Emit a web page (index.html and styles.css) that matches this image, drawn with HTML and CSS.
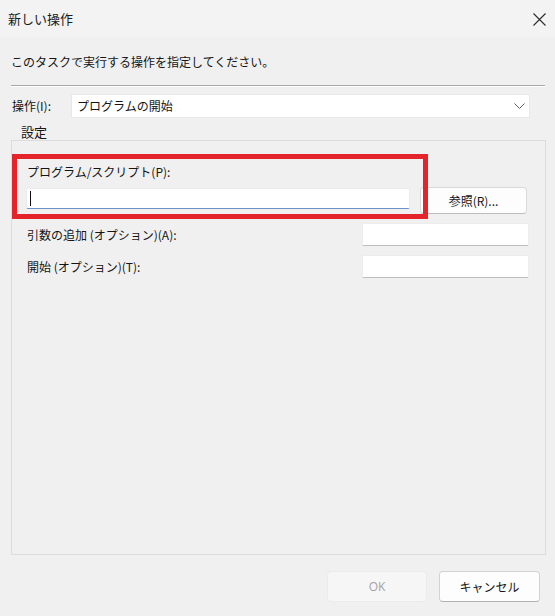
FILE: index.html
```html
<!DOCTYPE html>
<html lang="ja">
<head>
<meta charset="utf-8">
<title>新しい操作</title>
<link rel="stylesheet" href="styles.css">
</head>
<body>
<div class="dialog">
  <header class="titlebar">
    <span class="title">新しい操作</span>
    <svg class="close" width="13" height="13" viewBox="0 0 13 13" aria-hidden="true">
      <path d="M0.5 0.5 L12.5 12.5 M12.5 0.5 L0.5 12.5" stroke="#2b2b2b" stroke-width="1.1" fill="none"/>
    </svg>
  </header>
  <main class="content">
    <p class="intro">このタスクで実行する操作を指定してください。</p>
    <div class="sep"></div>
    <div class="action-row">
      <span class="action-label">操作(I):</span>
      <div class="combo">
        <span class="combo-text">プログラムの開始</span>
        <svg class="chevron" width="11" height="6" viewBox="0 0 11 6" aria-hidden="true">
          <polyline points="0.5,0.5 5.5,5.5 10.5,0.5" stroke="#5f5f5f" stroke-width="1" fill="none"/>
        </svg>
      </div>
    </div>
    <div class="group-title">設定</div>
    <section class="group">
      <div class="prog-label">プログラム/スクリプト(P):</div>
      <div class="prog-row">
        <div class="field prog-field"><span class="caret"></span></div>
        <button class="btn browse">参照(R)...</button>
      </div>
      <div class="opt-row">
        <span class="opt-label">引数の追加 (オプション)(A):</span>
        <div class="field opt-field"></div>
      </div>
      <div class="opt-row">
        <span class="opt-label">開始 (オプション)(T):</span>
        <div class="field opt-field"></div>
      </div>
    </section>
    <footer class="buttons">
      <button class="btn ok" disabled>OK</button>
      <button class="btn cancel">キャンセル</button>
    </footer>
  </main>
  <div class="highlight"></div>
</div>
</body>
</html>
```

FILE: styles.css
```css
* { box-sizing: border-box; }

html, body {
  margin: 0;
  padding: 0;
  background: #f0f0f0;
}

body {
  font-family: "Noto Sans CJK JP", "Noto Sans", sans-serif;
  font-size: 12px;
  color: #151515;
  width: 555px;
  height: 616px;
  overflow: hidden;
}

.dialog {
  width: 555px;
  height: 616px;
}

.titlebar {
  height: 37px;
  background: #f3f3f3;
  display: flex;
  align-items: center;
  justify-content: space-between;
  padding: 0 9px 0 8px;
}

.title {
  font-size: 13px;
  line-height: 18px;
  color: #1a1a1a;
}

.close { display: block; margin-top: 1px; }

.content {
  padding-left: 11px;
  width: 546px;
}

.intro {
  margin: 15px 0 0 0;
  line-height: 20px;
  font-size: 12px;
}

.sep {
  margin-top: 13px;
  width: 534px;
  height: 2px;
  border-top: 1px solid #a8a8a8;
  border-bottom: 1px solid #ffffff;
}

.action-row {
  margin-top: 7px;
  display: flex;
  align-items: center;
  height: 24px;
}

.action-label {
  width: 60px;
  padding-left: 1px;
  line-height: 16px;
}

.combo {
  width: 459px;
  height: 24px;
  background: #ffffff;
  border: 1px solid #e8e8e8;
  display: flex;
  align-items: center;
  justify-content: space-between;
  padding: 0 4px 0 5px;
}

.combo-text { line-height: 16px; }

.chevron { display: block; }

.group-title {
  margin-top: 6px;
  padding-left: 10px;
  font-size: 13px;
  line-height: 16px;
  height: 16px;
}

.group {
  width: 535px;
  height: 415px;
  border: 1px solid #dcdcdc;
  padding: 0 16px 0 0;
}

.prog-label {
  margin-top: 23px;
  padding-left: 15px;
  line-height: 16px;
}

.prog-row {
  margin-top: 7px;
  display: flex;
  align-items: flex-start;
  padding-left: 14px;
}

.field {
  background: #ffffff;
  border: 1px solid #ececec;
  border-bottom-color: #bdbdbd;
  border-radius: 2px;
}

.prog-field {
  width: 384px;
  height: 21px;
  margin-top: 1px;
  display: flex;
  align-items: center;
  padding-left: 3px;
  border-bottom-color: #6d92c8;
}

.caret {
  display: block;
  width: 1px;
  height: 15px;
  background: #111;
}

.btn {
  font-family: "Noto Sans CJK JP", "Noto Sans", sans-serif;
  font-size: 12px;
  line-height: 16px;
  color: #151515;
  background: #fdfdfd;
  border: 1px solid #dadada;
  border-bottom-color: #bdbdbd;
  border-radius: 4px;
  padding: 0;
  margin: 0;
  display: flex;
  align-items: center;
  justify-content: center;
}

.browse {
  width: 107px;
  height: 27px;
  margin-left: 10px;
}

.opt-row {
  margin-top: 9px;
  display: flex;
  align-items: center;
  justify-content: space-between;
  padding-left: 15px;
  height: 23px;
}

.opt-label { line-height: 16px; }

.opt-field {
  width: 167px;
  height: 23px;
}

.buttons {
  margin-top: 16px;
  display: flex;
  justify-content: flex-end;
  gap: 12px;
  padding-right: 6px;
}

.ok {
  width: 100px;
  height: 31px;
  background: #f6f6f6;
  border-color: #ebebeb;
  color: #a2a2a2;
  font-family: "Open Sans", "Noto Sans", sans-serif;
  font-size: 12px;
}

.cancel {
  width: 101px;
  height: 31px;
  border-color: #d2d2d2;
  border-bottom-color: #b3b3b3;
}

.highlight {
  position: absolute;
  left: 12px;
  top: 154px;
  width: 416px;
  height: 65px;
  border: 5px solid #e3252b;
  pointer-events: none;
}
```
